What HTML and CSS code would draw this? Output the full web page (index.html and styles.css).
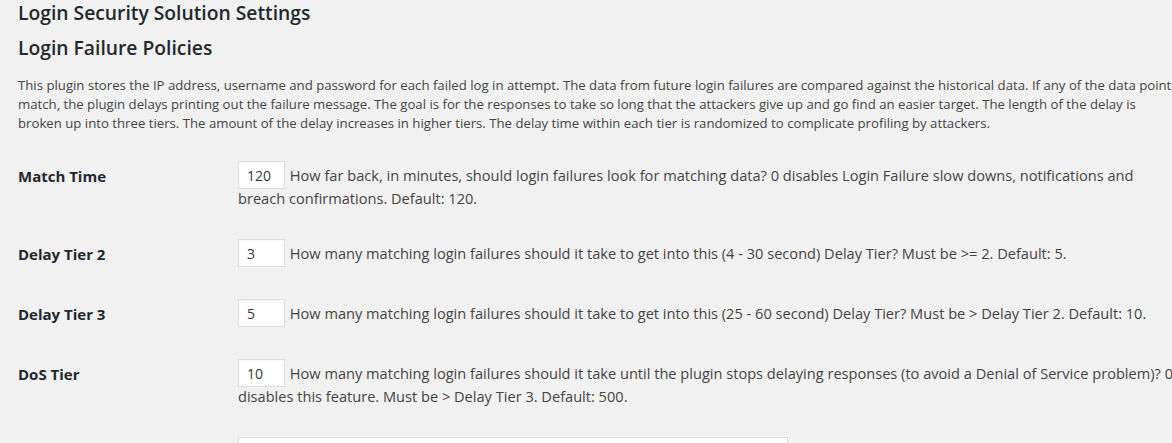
FILE: index.html
```html
<!DOCTYPE html>
<html>
<head>
<meta charset="utf-8">
<link rel="stylesheet" href="styles.css">
</head>
<body>
<div class="wrap">
  <h1 class="page-title">Login Security Solution Settings</h1>
  <h2 class="section-title">Login Failure Policies</h2>
  <p class="intro">This plugin stores the IP address, username and password for each failed log in attempt. The data from future login failures are compared against the historical data. If any of the data points match, the plugin delays printing out the failure message. The goal is for the responses to take so long that the attackers give up and go find an easier target. The length of the delay is broken up into three tiers. The amount of the delay increases in higher tiers. The delay time within each tier is randomized to complicate profiling by attackers.</p>
  <table class="form-table">
    <tr>
      <th>Match Time</th>
      <td><input class="small-text" type="text" value="120"> How far back, in minutes, should login failures look for matching data? 0 disables Login Failure slow downs, notifications and breach confirmations. Default: 120.</td>
    </tr>
    <tr>
      <th>Delay Tier 2</th>
      <td><input class="small-text" type="text" value="3"> How many matching login failures should it take to get into this (4 - 30 second) Delay Tier? Must be &gt;= 2. Default: 5.</td>
    </tr>
    <tr>
      <th>Delay Tier 3</th>
      <td><input class="small-text" type="text" value="5"> How many matching login failures should it take to get into this (25 - 60 second) Delay Tier? Must be &gt; Delay Tier 2. Default: 10.</td>
    </tr>
    <tr>
      <th>DoS Tier</th>
      <td><input class="small-text" type="text" value="10"> How many matching login failures should it take until the plugin stops delaying responses (to avoid a Denial of Service problem)? 0 disables this feature. Must be &gt; Delay Tier 3. Default: 500.</td>
    </tr>
    <tr>
      <th></th>
      <td><textarea class="large-text" rows="3"></textarea></td>
    </tr>
  </table>
</div>
</body>
</html>
```
FILE: styles.css
```css
html, body {
  margin: 0;
  padding: 0;
  background: #f1f1f1;
  overflow: hidden;
}
body {
  font-family: "Open Sans", "Noto Sans", sans-serif;
  color: #444;
  width: 1400px;
}
.wrap {
  width: 1161px;
  padding-left: 18px;
}
.page-title {
  margin: 0;
  padding-top: 1px;
  font-size: 19.3px;
  font-weight: 600;
  line-height: 24px;
  color: #23282d;
}
.section-title {
  margin: 11px 0 0;
  font-size: 19.3px;
  font-weight: 600;
  line-height: 24px;
  color: #23282d;
}
.intro {
  margin: 16px 0 0;
  font-size: 13.2px;
  line-height: 19px;
}
.form-table {
  border-collapse: collapse;
  margin-top: 12px;
  width: 100%;
}
.form-table th {
  width: 200px;
  padding: 22px 10px 18px 0;
  text-align: left;
  vertical-align: top;
  font-size: 15px;
  font-weight: 700;
  line-height: 18px;
  color: #23282d;
}
.form-table td {
  padding: 16px 0 16px 10px;
  vertical-align: top;
  font-size: 14.6px;
  line-height: 18px;
}
.small-text {
  box-sizing: border-box;
  width: 47px;
  height: 28px;
  margin: 0 1px 0 0;
  padding: 0 8px;
  border: 1px solid #ddd;
  background: #fff;
  color: #32373c;
  font-family: inherit;
  font-size: 14px;
  box-shadow: inset 0 1px 2px rgba(0,0,0,0.04);
}
.large-text {
  box-sizing: border-box;
  display: block;
  width: 550px;
  height: 60px;
  margin: 0;
  border: 1px solid #ddd;
  background: #fff;
  font-family: inherit;
}
```
